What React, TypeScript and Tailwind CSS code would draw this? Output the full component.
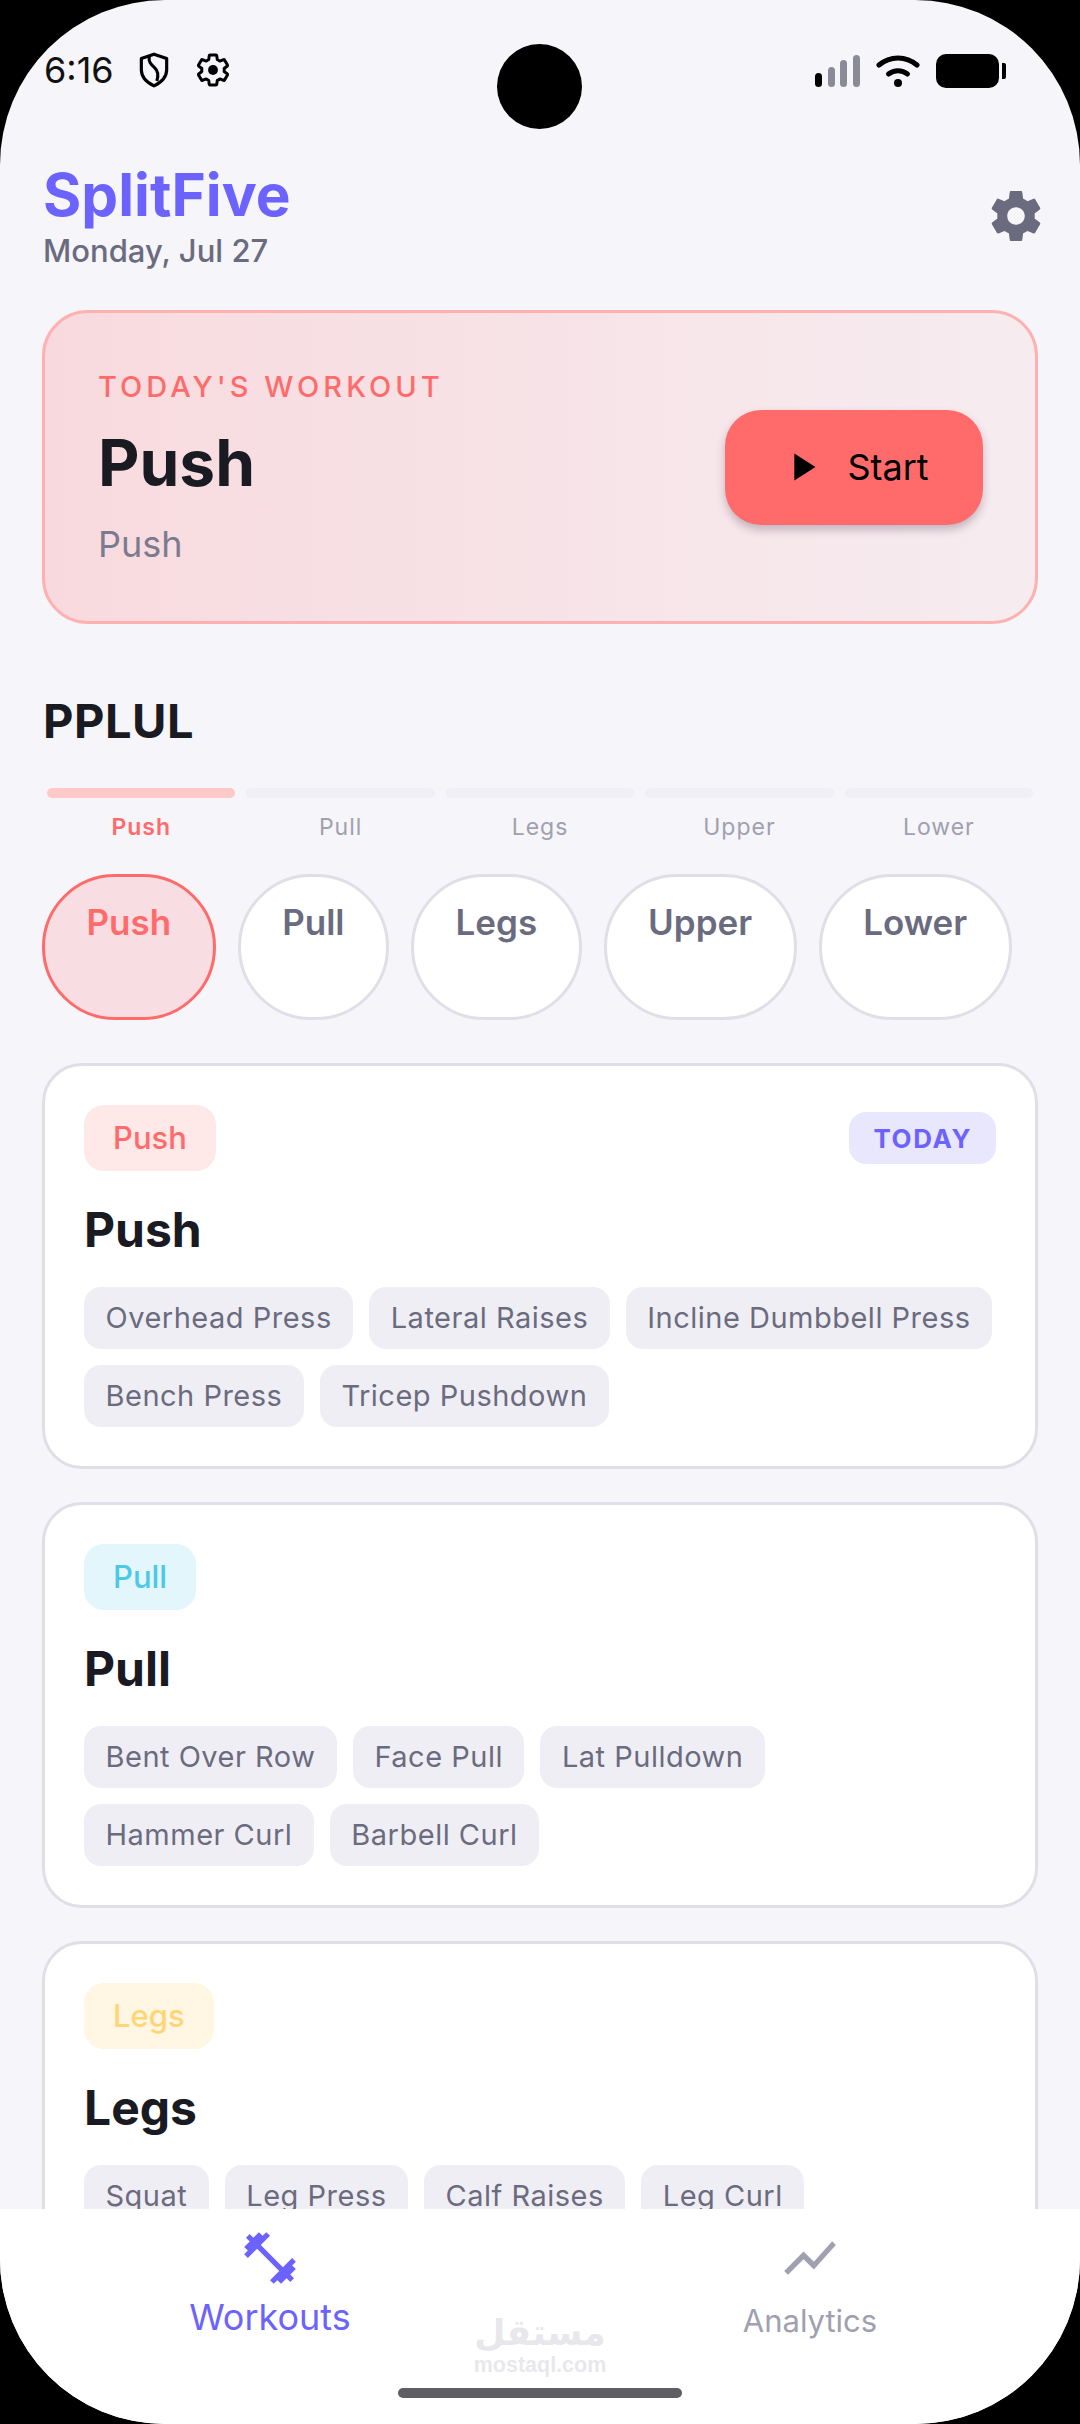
import React from 'react';

const gearPath = "M19.43 12.98c.04-.32.07-.64.07-.98s-.03-.66-.07-.98l2.11-1.65c.19-.15.24-.42.12-.64l-2-3.46c-.12-.22-.39-.3-.61-.22l-2.49 1c-.52-.4-1.08-.73-1.69-.98l-.38-2.65C14.46 2.18 14.25 2 14 2h-4c-.25 0-.46.18-.49.42l-.38 2.65c-.61.25-1.17.59-1.69.98l-2.49-1c-.23-.09-.49 0-.61.22l-2 3.46c-.13.22-.07.49.12.64l2.11 1.65c-.04.32-.07.65-.07.98s.03.66.07.98l-2.11 1.65c-.19.15-.24.42-.12.64l2 3.46c.12.22.39.3.61.22l2.49-1c.52.4 1.08.73 1.69.98l.38 2.65c.03.24.24.42.49.42h4c.25 0 .46-.18.49-.42l.38-2.65c.61-.25 1.17-.59 1.69-.98l2.49 1c.23.09.49 0 .61-.22l2-3.46c.12-.22.07-.49-.12-.64l-2.11-1.65z";

const days = ['Push', 'Pull', 'Legs', 'Upper', 'Lower'];

const workouts = [
    {
        name: 'Push',
        badge: 'bg-[#FFE8E8] text-[#FF6B6B]',
        today: true,
        rows: [['Overhead Press', 'Lateral Raises', 'Incline Dumbbell Press'], ['Bench Press', 'Tricep Pushdown']],
    },
    {
        name: 'Pull',
        badge: 'bg-[#E3F6FB] text-[#4DC9E6]',
        today: false,
        rows: [['Bent Over Row', 'Face Pull', 'Lat Pulldown'], ['Hammer Curl', 'Barbell Curl']],
    },
    {
        name: 'Legs',
        badge: 'bg-[#FFF6E3] text-[#FFD576]',
        today: false,
        rows: [['Squat', 'Leg Press', 'Calf Raises', 'Leg Curl']],
    },
];

const StatusBar = () => (
    <div className="relative h-[165px] shrink-0 pl-[44px] pt-[48px]">
        <div className="flex items-center">
            <span className="text-[36px] leading-[44px] text-[#111]">6:16</span>
            <svg width="38" height="40" viewBox="0 0 24 25" fill="none" stroke="black" strokeWidth="2" className="ml-[21px]">
                <path d="M12 2.5l8 2.8v7c0 4.8-3.4 8-8 10.2-4.6-2.2-8-5.400-8-10.200v-7z" strokeLinejoin="round" />
                <path d="M9 4c-.6 3.500 1.200 5 3.200 6.800 2 1.800 3 4.200 1.600 8.700" />
            </svg>
            <svg width="36" height="36" viewBox="0 0 24 24" fill="none" stroke="black" strokeWidth="2" className="ml-[22px]">
                <path d={gearPath} strokeLinejoin="round" />
                <circle cx="12" cy="12" r="3.300" fill="black" stroke="none" />
            </svg>
        </div>
        <div className="absolute left-[497px] top-[44px] h-[85px] w-[85px] rounded-full bg-black" />
        <div className="absolute left-[815px] top-[54px] flex items-start">
            <svg width="46" height="34" viewBox="0 0 46 34">
                <rect x="0" y="19" width="7" height="14" rx="3.500" fill="black" />
                <rect x="13" y="13" width="7" height="20" rx="3.500" fill="#8B8B98" />
                <rect x="25" y="6" width="7" height="27" rx="3.500" fill="#8B8B98" />
                <rect x="38" y="1" width="7" height="32" rx="3.500" fill="#8B8B98" />
            </svg>
            <svg width="44" height="34" viewBox="0 0 44 34" fill="none" stroke="black" strokeWidth="5" strokeLinecap="round" className="ml-[15px]">
                <path d="M3 11C14 1.500 30 1.500 41 11" />
                <path d="M12.500 20C18 15.500 26 15.500 31.500 20" />
                <circle cx="22" cy="29" r="4" fill="black" stroke="none" />
            </svg>
            <div className="ml-[16px] h-[34px] w-[63px] rounded-[10px] bg-black" />
            <div className="ml-[3px] mt-[9px] h-[16px] w-[4px] rounded-r-[2px] bg-black" />
        </div>
    </div>
);

const WorkoutCard = ({workout}: {workout: typeof workouts[number]}) => (
    <div className="mb-[33px] rounded-[40px] border-[3px] border-[#DFDFE8] bg-white p-[39px]">
        <div className="flex items-center justify-between">
            <span className={`flex h-[66px] items-center rounded-[20px] px-[29px] text-[31px] font-medium ${workout.badge}`}>
                {workout.name}
            </span>
            {workout.today && (
                <span className="flex h-[52px] items-center rounded-[17px] bg-[#E9E7FD] px-[24px] text-[26px] font-bold tracking-[1.6px] text-[#6C63FF]">
                    TODAY
                </span>
            )}
        </div>
        <h2 className="mt-[31px] text-[48px] font-bold leading-[56px] text-[#1A1A22]">{workout.name}</h2>
        <div className="mt-[29px] flex flex-col gap-[16px]">
            {workout.rows.map((row, i) => (
                <div key={i} className="flex gap-[16px]">
                    {row.map((tag) => (
                        <span key={tag} className="flex h-[62px] items-center whitespace-nowrap rounded-[17px] bg-[#EFEEF4] px-[21.5px] text-[29px] tracking-[0.5px] text-[#6B6B80]">
                            {tag}
                        </span>
                    ))}
                </div>
            ))}
        </div>
    </div>
);

const App = () => {
    return (
        <div className="h-[2424px] w-[1080px] bg-black font-['Inter',sans-serif]">
            <div className="flex h-full flex-col overflow-hidden rounded-[165px] bg-[#F5F5FA]">
                <StatusBar />

                <main className="min-h-0 flex-1 overflow-hidden px-[42px]">
                    <header className="flex items-center justify-between">
                        <div className="pl-[1px]">
                            <h1 className="text-[58.500px] font-bold leading-[60px] text-[#6C63FF]">SplitFive</h1>
                            <p className="mt-[6px] text-[31px] font-medium leading-[40px] text-[#6B6B80]">Monday, Jul 27</p>
                        </div>
                        <svg width="60" height="60" viewBox="0 0 24 24" fill="#6B6B80" fillRule="evenodd" className="mb-[5px] mr-[-8px]">
                            <path d="M19.43 12.98c.04-.32.07-.64.07-.98s-.03-.66-.07-.98l2.11-1.65c.19-.15.24-.42.12-.64l-2-3.46c-.12-.22-.39-.3-.61-.22l-2.49 1c-.52-.4-1.08-.73-1.69-.98l-.38-2.65C14.46 2.18 14.25 2 14 2h-4c-.25 0-.46.18-.49.42l-.38 2.65c-.61.25-1.17.59-1.69.98l-2.49-1c-.23-.09-.49 0-.61.22l-2 3.46c-.13.22-.07.49.12.64l2.11 1.65c-.04.32-.07.65-.07.98s.03.66.07.98l-2.11 1.65c-.19.15-.24.42-.12.64l2 3.46c.12.22.39.3.61.22l2.49-1c.52.4 1.08.73 1.69.98l.38 2.65c.03.24.24.42.49.42h4c.25 0 .46-.18.49-.42l.38-2.65c.61-.25 1.17-.59 1.69-.98l2.49 1c.23.09.49 0 .61-.22l2-3.46c.12-.22.07-.49-.12-.64l-2.11-1.65zM12 15.500c-1.930 0-3.500-1.570-3.500-3.500s1.570-3.500 3.500-3.500 3.500 1.570 3.500 3.500-1.570 3.500-3.500 3.500z" />
                        </svg>
                    </header>

                    <section className="mt-[39px] flex h-[314px] items-center justify-between rounded-[46px] border-[3px] border-[#FFB0B0] bg-gradient-to-r from-[#F8DADE] to-[#F6ECF0] pl-[53px] pr-[52px]">
                        <div>
                            <p className="text-[29px] font-medium leading-[36px] tracking-[4px] text-[#FF6B6B]">TODAY'S WORKOUT</p>
                            <h2 className="mt-[20px] text-[64px] font-bold leading-[76px] text-[#1A1A22]">Push</h2>
                            <p className="mt-[21px] text-[36px] leading-[44px] text-[#7B7B90]">Push</p>
                        </div>
                        <button className="flex h-[115px] w-[258px] items-center justify-center gap-[22px] rounded-[36px] bg-[#FF6B6B] text-[36px] text-black shadow-[0_5px_8px_rgba(80,60,80,0.3)]">
                            <svg width="46" height="46" viewBox="0 0 24 24" fill="black">
                                <path d="M8 5v14l11-7z" />
                            </svg>
                            Start
                        </button>
                    </section>

                    <h2 className="mt-[70px] pl-[1px] text-[47px] font-bold leading-[54px] tracking-[0.5px] text-[#1A1A22]">PPLUL</h2>

                    <div className="mt-[40px] flex gap-[11px] px-[5px]">
                        {days.map((day, i) => (
                            <div key={day} className="flex-1">
                                <div className={i === 0 ? 'h-[10px] rounded-full bg-[#FFC9C9]' : 'h-[10px] rounded-full bg-[#EFEFF5]'} />
                                <p className={i === 0
                                    ? 'mt-[15px] text-center text-[23px] font-semibold leading-[28px] tracking-[1px] text-[#FF6B6B]'
                                    : 'mt-[15px] text-center text-[23px] leading-[28px] tracking-[1px] text-[#A0A0B0]'}>
                                    {day}
                                </p>
                            </div>
                        ))}
                    </div>

                    <div className="mb-[43px] mt-[33px] flex gap-[22px]">
                        {days.map((day, i) => (
                            <div
                                key={day}
                                className={i === 0
                                    ? 'h-[146px] rounded-full border-[3px] border-[#FF6B6B] bg-[#F8DEE3] px-[41.5px] pt-[25px] text-[35px] font-semibold leading-[40px] text-[#FF6B6B]'
                                    : 'h-[146px] rounded-full border-[3px] border-[#DFDFE8] bg-white px-[41.5px] pt-[25px] text-[35px] font-semibold leading-[40px] text-[#6B6B80]'}
                            >
                                {day}
                            </div>
                        ))}
                    </div>

                    {workouts.map((workout) => (
                        <WorkoutCard key={workout.name} workout={workout} />
                    ))}
                </main>

                <nav className="relative grid h-[215px] shrink-0 grid-cols-2 bg-white pt-[18px]">
                    <div className="flex flex-col items-center">
                        <svg width="62" height="62" viewBox="0 0 24 24" fill="#6C63FF">
                            <path d="M20.57 14.86L22 13.43 20.57 12 17 15.57 8.43 7 12 3.430 10.57 2 9.140 3.430 7.710 2 5.570 4.140 4.140 2.710 2.710 4.140l1.430 1.430L2 7.710l1.430 1.430L2 10.570 3.430 12 7 8.430 15.570 17 12 20.570 13.430 22l1.430-1.430L16.290 22l2.140-2.140 1.430 1.430 1.430-1.430-1.430-1.430L22 16.290z" />
                        </svg>
                        <span className="mt-[6px] text-[36px] leading-[44px] text-[#6C63FF]">Workouts</span>
                    </div>
                    <div className="flex flex-col items-center">
                        <svg width="62" height="62" viewBox="0 0 24 24" fill="#A0A0B0">
                            <path d="M3.500 18.490l6-6.010 4 4L22 6.920l-1.410-1.410-7.090 7.970-4-4L2 16.99z" />
                        </svg>
                        <span className="mt-[12px] text-[31px] leading-[40px] text-[#A0A0B0]">Analytics</span>
                    </div>

                    <div className="absolute left-[475px] top-[102px] flex w-[130px] flex-col items-center text-[#E8E8EC]">
                        <span dir="rtl" className="font-['DejaVu_Sans',sans-serif] text-[36px] font-bold leading-[44px]">مستقل</span>
                        <span className="whitespace-nowrap font-['Liberation_Sans',sans-serif] text-[21.500px] font-bold leading-[20px]">mostaql.com</span>
                    </div>
                    <div className="absolute left-[398px] top-[179px] h-[10px] w-[284px] rounded-full bg-[#5F5F63]" />
                </nav>
            </div>
        </div>
    );
};

export default App;
